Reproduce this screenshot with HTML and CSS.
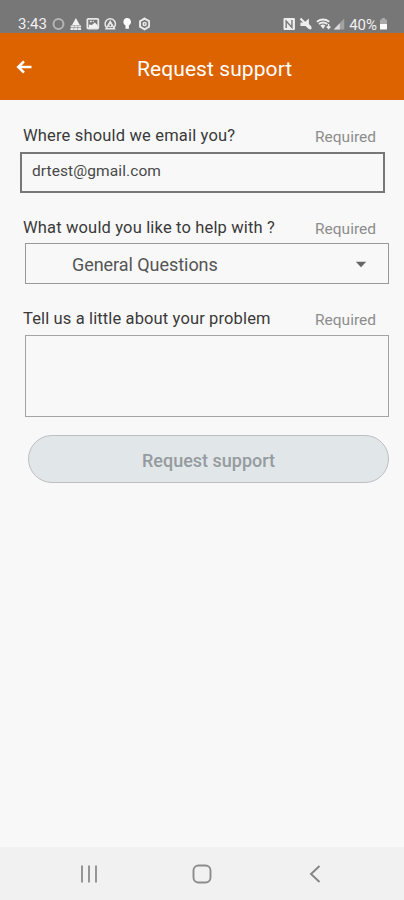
FILE: index.html
```html
<!DOCTYPE html>
<html lang="en">
<head>
<meta charset="utf-8">
<meta name="viewport" content="width=device-width, initial-scale=1">
<title>Request support</title>
<link rel="stylesheet" href="styles.css">
</head>
<body>
<div class="screen">
  <div class="status">
    <span class="clock">3:43</span>
    <svg class="notices" width="100" height="14" viewBox="0 0 100 14" fill="none" stroke="#e8e8e8">
      <circle cx="7.500" cy="7" r="5" stroke="#b5b5b5" stroke-width="2"/>
      <path d="M25 1l4 7.200h-8z" fill="#f2f2f2" stroke="none"/>
      <path d="M19.800 9.500h10.400M19.500 12h11" stroke-width="2" stroke-dasharray="3.300 .4"/>
      <rect x="36.500" y="1.800" width="11" height="9.700" rx="1" stroke-width="1.800"/>
      <path d="M38 10V7.500l3 .5 3-2.500 3 3V11h-9z" fill="#f2f2f2" stroke="none"/>
      <path d="M39 4.500h2M42 4.500h1" stroke-width="1.500"/>
      <path d="M55.700 10.500a5.200 5.200 0 1 1 7.600 0" stroke-width="1.500"/>
      <path d="M59.500 4.500l4.200 7.300h-8.400z" stroke-width="1.500"/>
      <circle cx="59.500" cy="8.300" r="1.600" stroke-width="1.300"/>
      <path d="M76.500 1a4 4 0 0 1 1.700 7.500v3.300h-3.400V8.500A4 4 0 0 1 76.500 1z" fill="#fff" stroke="none"/>
      <path d="M94 1.500l4.600 2.700v5.500L94 12.400l-4.600-2.700V4.200z" stroke-width="2"/>
      <circle cx="94" cy="7" r="1.500" stroke-width="1.500"/>
    </svg>
    <svg class="signals" width="64" height="14" viewBox="0 0 64 14" fill="none" stroke="#eee">
      <rect x="1.500" y="1" width="11.500" height="12" rx="1" fill="#eee" stroke="none"/>
      <path d="M4.200 11V4l5.800 6.500V3" stroke="#777" stroke-width="1.400"/>
      <path d="M18.500 5.500h4L27 1.500v5.500l2.500 2.500V12H27l-3.500-3h-5z" fill="#eee" stroke="none"/>
      <path d="M18.500 1.500l10.500 10.500" stroke-width="2"/>
      <path d="M35 4.700q6.200-4.500 12.500 0M37 7q4.200-3 8.500 0" stroke-width="1.800"/>
      <path d="M38.500 8.500q2.700-2 5 0L41.300 12z" fill="#eee" stroke="none"/>
      <path d="M46.800 7v4M45 9.500l1.800 2 1.800-2" stroke-width="1.400"/>
      <path d="M52 12.500L62.500 1.500v11z" fill="#a2a2a2" stroke="none"/>
      <path d="M52 12.500l6-6.300v6.300z" fill="#ddd" stroke="none"/>
    </svg>
    <span class="percent">40%</span>
    <svg class="battery" width="9" height="14" viewBox="0 0 9 14">
      <path d="M3 1h3v1.500h2V7H1V2.500h2z" fill="#aaa"/>
      <path d="M1 7h7v5.500H1z" fill="#fff"/>
    </svg>
  </div>
  <header class="bar">
    <svg class="back" width="16" height="14" viewBox="0 0 16 14" fill="none" stroke="#fff" stroke-width="2.500">
      <path d="M15.500 7H2.500M8 1.300L2.200 7 8 12.700"/>
    </svg>
    <h1 class="title">Request support</h1>
  </header>
  <main class="form">
    <div class="row"><label class="label l1">Where should we email you?</label><span class="req">Required</span></div>
    <div class="box email">drtest@gmail.com</div>
    <div class="row"><label class="label l2">What would you like to help with ?</label><span class="req">Required</span></div>
    <div class="box select"><span>General Questions</span>
      <svg width="12" height="7" viewBox="0 0 12 7"><path d="M.8.800h10.400L6 6.200z" fill="#666"/></svg>
    </div>
    <div class="row"><label class="label l3">Tell us a little about your problem</label><span class="req">Required</span></div>
    <div class="box area"></div>
    <button class="submit">Request support</button>
  </main>
  <nav class="nav">
    <svg width="20" height="20" viewBox="0 0 20 20" stroke="#8c8c8c" stroke-width="1.800"><path d="M3 1.500v17M10 1.500v17M17 1.500v17"/></svg>
    <svg width="20" height="20" viewBox="0 0 20 20" fill="none" stroke="#8c8c8c" stroke-width="1.900"><rect x="1.500" y="1.500" width="17" height="17" rx="5"/></svg>
    <svg width="20" height="20" viewBox="0 0 20 20" fill="none" stroke="#858585" stroke-width="1.900"><path d="M14.500 2L6 10l8.500 8"/></svg>
  </nav>
</div>
</body>
</html>
```
FILE: styles.css
```css
* { box-sizing: border-box; }
body { margin: 0; font-family: Roboto, "Liberation Sans", sans-serif; background: #f8f8f8; }
.screen { width: 404px; height: 900px; display: flex; flex-direction: column; }
.status { height: 33px; background: #777; color: #f0f0f0; display: flex; align-items: flex-start; padding: 17px 16px 0 18px; font-size: 15px; line-height: 15px; white-space: nowrap; }
.clock { width: 33px; }
.signals { margin-left: 132px; }
.percent { width: 29px; margin-left: 3px; font-size: 15px; line-height: 16px; }
.battery { margin-left: 1px; }
.bar { height: 67px; background: #dd6200; display: flex; align-items: center; padding-left: 16px; }
.back { margin-top: 1px; }
.title { margin: 5px 0 0 105px; font-size: 21px; line-height: 26px; font-weight: 400; letter-spacing: 0.08px; color: #fff; white-space: nowrap; }
.form { flex: 1; padding: 25px 15px 0 20px; }
.row { height: 22px; display: flex; justify-content: space-between; padding: 0 13px 0 3px; line-height: 22px; font-size: 16px; white-space: nowrap; }
.label { color: #3a3a3a; font-size: 16.5px; }
.l1 { letter-spacing: 0.17px; }
.l2 { letter-spacing: 0.16px; }
.l3 { letter-spacing: 0.13px; }
.req { color: #8d8d8d; padding-top: 1px; font-size: 15.5px; }
.box { margin-left: 5px; border: 1px solid #999; }
.email { margin: 5px 4px 24px 0; height: 41px; border: 2px solid #777; padding: 0 10px; font-size: 15.5px; line-height: 34px; letter-spacing: 0.09px; color: #484848; }
.select { height: 41px; margin-top: 4px; margin-bottom: 24px; display: flex; justify-content: space-between; align-items: center; padding: 1px 21px 0 46px; font-size: 18px; letter-spacing: -0.05px; color: #555; }
.area { height: 82px; margin-top: 5px; border-color: #a4a4a4; }
.submit { display: block; width: 361px; height: 48px; margin: 18px 0 0 8px; padding: 3px 0 0; border: 1px solid #bdbfc0; border-radius: 24px; background: #e1e6e9; color: #959b9e; font: 500 18px/24px Roboto, "Liberation Sans", sans-serif; }
.nav { height: 53px; background: #f1f1f1; display: flex; justify-content: space-between; align-items: center; padding: 0 79px; }
```
